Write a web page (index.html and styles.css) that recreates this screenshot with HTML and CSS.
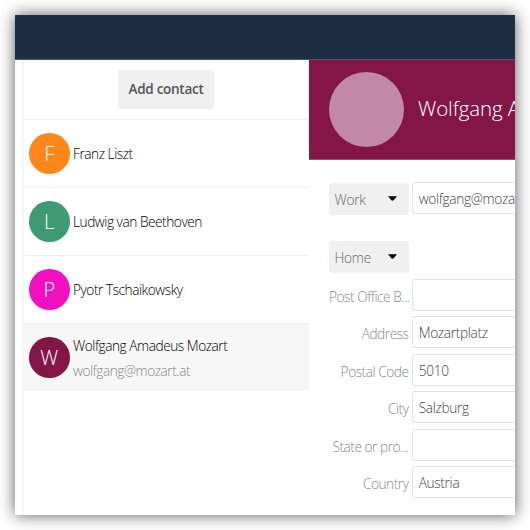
FILE: index.html
```
<!DOCTYPE html>
<html lang="en">
<head>
<meta charset="utf-8">
<title>Contacts</title>
<link rel="stylesheet" href="styles.css">
</head>
<body>
<div class="window">
  <header class="topbar"></header>
  <div class="content">
    <aside class="list">
      <div class="toolbar"><button class="add">Add contact</button></div>
      <div class="contact"><span class="avatar orange">F</span><div class="info"><div>Franz Liszt</div></div></div>
      <div class="contact"><span class="avatar green">L</span><div class="info"><div>Ludwig van Beethoven</div></div></div>
      <div class="contact"><span class="avatar pink">P</span><div class="info"><div>Pyotr Tschaikowsky</div></div></div>
      <div class="contact active"><span class="avatar wine">W</span><div class="info"><div>Wolfgang Amadeus Mozart</div><div class="mail">wolfgang@mozart.at</div></div></div>
    </aside>
    <main class="details">
      <div class="hero"><span class="photo"></span><h1>Wolfgang A</h1></div>
      <div class="row email">
        <div class="select"><span>Work</span><svg class="caret" viewBox="0 0 8 4"><path d="M0 0h8L5 3.6Q4 4.4 3 3.6z"/></svg></div>
        <div class="field">wolfgang@moza</div>
      </div>
      <div class="row home">
        <div class="select"><span>Home</span><svg class="caret" viewBox="0 0 8 4"><path d="M0 0h8L5 3.6Q4 4.4 3 3.6z"/></svg></div>
      </div>
      <div class="address">
        <div class="row"><div class="label">Post Office B...</div><div class="field"></div></div>
        <div class="row"><div class="label">Address</div><div class="field">Mozartplatz</div></div>
        <div class="row"><div class="label">Postal Code</div><div class="field">5010</div></div>
        <div class="row"><div class="label">City</div><div class="field">Salzburg</div></div>
        <div class="row"><div class="label">State or pro...</div><div class="field"></div></div>
        <div class="row"><div class="label">Country</div><div class="field">Austria</div></div>
      </div>
    </main>
  </div>
</div>
</body>
</html>
```
FILE: styles.css
```
* { box-sizing: border-box; }
body {
  margin: 0;
  padding: 15px;
  height: 530px;
  overflow: hidden;
  background: #fff;
  font: 300 13.7px/20px "Open Sans", sans-serif;
  letter-spacing: -.47px;
  color: #000;
}
.window {
  width: 500px;
  height: 500px;
  overflow: hidden;
  display: flex;
  flex-direction: column;
  background: #fff;
  box-shadow: 0 0 15px rgba(0, 0, 0, .65);
}
.topbar { height: 45px; flex: none; background: #1d2d44; border-bottom: 1px solid #4a576a; }
.content { display: flex; flex: 1; padding-left: 7px; }
.list { width: 287px; flex: none; border-left: 2px solid #f7f7f7; }
.toolbar { height: 59px; display: flex; justify-content: center; padding: 10px 1px 0 0; }
.add {
  width: 96px;
  height: 39px;
  padding: 0;
  border: 0;
  border-radius: 3px;
  background: #f0f0f0;
  color: #555;
  font: 600 13.5px/39px "Open Sans", sans-serif;
  letter-spacing: -.27px;
}
.contact {
  height: 68px;
  display: flex;
  align-items: center;
  gap: 3.5px;
  padding: 0 0 0 5px;
  border-top: 1px solid #eee;
}
.contact.active { background: #f7f7f7; }
.info { line-height: 25px; }
.mail { color: #888; }
.avatar {
  width: 40.5px;
  height: 40.5px;
  border-radius: 50%;
  color: #fff;
  font-size: 20px;
  letter-spacing: 0;
  line-height: 42px;
  text-align: center;
}
.orange { background: #ff871a; }
.green { background: #3e9a72; }
.pink { background: #f010c0; }
.wine { background: #841547; }
.details { width: 206px; flex: none; }
.hero {
  height: 100px;
  display: flex;
  align-items: center;
  gap: 14px;
  padding-left: 20px;
  background: #841547;
  color: #fff;
  border-bottom: 1px solid #a34c72;
}
.photo { width: 75px; height: 75px; flex: none; border-radius: 50%; background: #c189a3; }
h1 { margin: -3px 0 0; font-size: 20.5px; letter-spacing: -.1px; line-height: 28px; font-weight: 300; white-space: nowrap; }
.row { display: flex; gap: 3px; padding-left: 20px; }
.email { margin-top: 22px; height: 33px; }
.home { margin-top: 26px; height: 32px; }
.select {
  width: 80px;
  height: 32px;
  flex: none;
  display: flex;
  align-items: center;
  justify-content: space-between;
  padding: 1px 12px 0 5.5px;
  border-radius: 3px;
  background: #f0f0f0;
  color: #666;
  letter-spacing: -.25px;
}
.email .select { margin-top: 1px; }
.caret { width: 9px; height: 5px; margin-top: -2px; fill: #000; }
.label {
  width: 80px;
  flex: none;
  padding-right: .5px;
  color: #888;
  text-align: right;
  white-space: nowrap;
  line-height: 36px;
}
.field {
  flex: none;
  width: 103px;
  height: 32px;
  border: 1px solid #e2e2e2;
  border-right: 0;
  border-radius: 3px 0 0 3px;
  padding: 0 0 0 5.7px;
  line-height: 32px;
  letter-spacing: -.33px;
  color: #444;
}
.address { margin-top: 6px; }
.address .row { height: 37.4px; }
```
